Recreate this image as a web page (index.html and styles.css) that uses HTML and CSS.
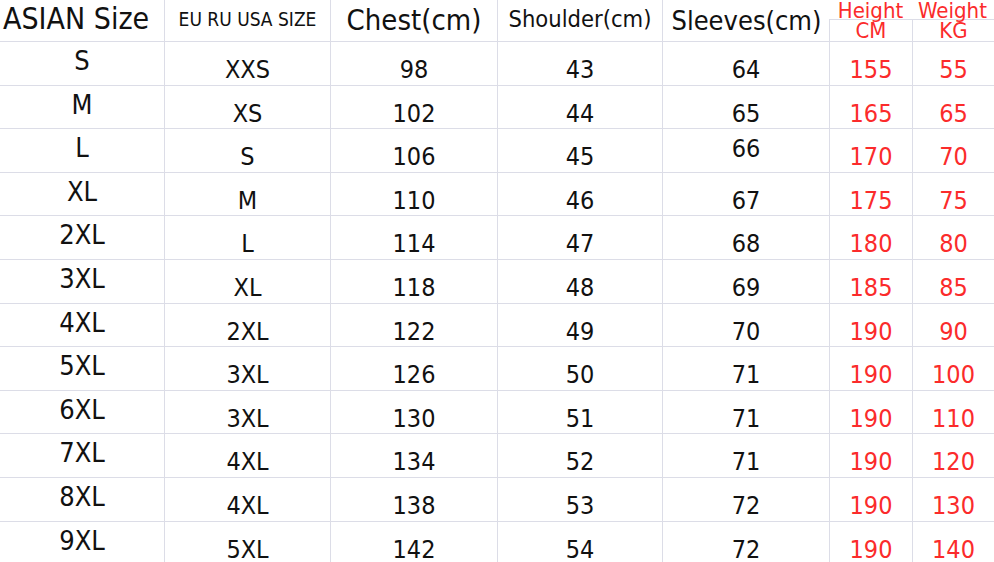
FILE: index.html
```html
<!DOCTYPE html>
<html>
<head>
<meta charset="utf-8">
<link rel="stylesheet" href="styles.css">
</head>
<body>
<div class="chart">
  <div class="hcell h-asian">ASIAN Size</div>
  <div class="hcell h-eu">EU RU USA SIZE</div>
  <div class="hcell h-chest">Chest(cm)</div>
  <div class="hcell h-shoulder">Shoulder(cm)</div>
  <div class="hcell h-sleeves">Sleeves(cm)</div>
  <div class="hcell h-red">
    <div class="red-top"><span class="rt-h">Height</span><span class="rt-w">Weight</span></div>
    <div class="red-bot"><span class="rb-h">CM</span><span class="rb-w">KG</span></div>
  </div>

  <div class="c c0">S</div><div class="c">XXS</div><div class="c">98</div><div class="c">43</div><div class="c">64</div><div class="c red">155</div><div class="c red last">55</div>
  <div class="c c0">M</div><div class="c">XS</div><div class="c">102</div><div class="c">44</div><div class="c">65</div><div class="c red">165</div><div class="c red last">65</div>
  <div class="c c0">L</div><div class="c">S</div><div class="c">106</div><div class="c">45</div><div class="c up">66</div><div class="c red">170</div><div class="c red last">70</div>
  <div class="c c0">XL</div><div class="c">M</div><div class="c">110</div><div class="c">46</div><div class="c">67</div><div class="c red">175</div><div class="c red last">75</div>
  <div class="c c0">2XL</div><div class="c">L</div><div class="c">114</div><div class="c">47</div><div class="c">68</div><div class="c red">180</div><div class="c red last">80</div>
  <div class="c c0">3XL</div><div class="c">XL</div><div class="c">118</div><div class="c">48</div><div class="c">69</div><div class="c red">185</div><div class="c red last">85</div>
  <div class="c c0">4XL</div><div class="c">2XL</div><div class="c">122</div><div class="c">49</div><div class="c">70</div><div class="c red">190</div><div class="c red last">90</div>
  <div class="c c0">5XL</div><div class="c">3XL</div><div class="c">126</div><div class="c">50</div><div class="c">71</div><div class="c red">190</div><div class="c red last">100</div>
  <div class="c c0">6XL</div><div class="c">3XL</div><div class="c">130</div><div class="c">51</div><div class="c">71</div><div class="c red">190</div><div class="c red last">110</div>
  <div class="c c0">7XL</div><div class="c">4XL</div><div class="c">134</div><div class="c">52</div><div class="c">71</div><div class="c red">190</div><div class="c red last">120</div>
  <div class="c c0">8XL</div><div class="c">4XL</div><div class="c">138</div><div class="c">53</div><div class="c">72</div><div class="c red">190</div><div class="c red last">130</div>
  <div class="c c0">9XL</div><div class="c">5XL</div><div class="c">142</div><div class="c">54</div><div class="c">72</div><div class="c red">190</div><div class="c red last">140</div>
</div>
</body>
</html>
```

FILE: styles.css
```css
html, body {
  margin: 0;
  padding: 0;
  background: #ffffff;
  overflow: hidden;
}

.chart {
  display: grid;
  grid-template-columns: 165px 166px 167px 165px 167px 83px 81px;
  grid-template-rows: 42px;
  grid-auto-rows: 43.6px;
  width: 994px;
  font-family: "DejaVu Sans Condensed", "DejaVu Sans", sans-serif;
  font-stretch: condensed;
  color: #111111;
}

.c {
  border-right: 1px solid #dcdde7;
  border-bottom: 1px solid #dcdde7;
  text-align: center;
  font-size: 25px;
  line-height: 29px;
  padding-top: 13px;
  box-sizing: border-box;
}

.c.c0 {
  font-size: 27px;
  padding-top: 4px;
}

.c.up {
  padding-top: 5px;
}

.c.red {
  color: #fb2b2b;
}

.c.last {
  border-right: none;
}

.hcell {
  border-right: 1px solid #dcdde7;
  border-bottom: 1px solid #dcdde7;
  box-sizing: border-box;
  white-space: nowrap;
  text-align: center;
}

.h-asian {
  font-size: 30px;
  line-height: 34px;
  padding-top: 2px;
  text-align: left;
  padding-left: 3px;
}

.h-eu {
  font-size: 19px;
  line-height: 22px;
  padding-top: 8px;
}

.h-chest {
  font-size: 29px;
  line-height: 34px;
  padding-top: 3px;
}

.h-shoulder {
  font-size: 23.5px;
  line-height: 26px;
  padding-top: 6px;
}

.h-sleeves {
  font-size: 27px;
  line-height: 32px;
  padding-top: 5px;
  border-right: none;
}

.h-red {
  grid-column: span 2;
  border-right: none;
  color: #fb2b2b;
  font-size: 22px;
  display: flex;
  flex-direction: column;
}

.red-top {
  height: 19px;
  border-bottom: 1px solid #dcdde7;
  display: flex;
  line-height: 21px;
  margin-left: -1px;
}

.rt-h, .rb-h {
  width: 83px;
  text-align: center;
}

.rt-w, .rb-w {
  width: 81px;
  text-align: center;
}

.red-bot {
  flex: 1;
  display: flex;
  line-height: 22px;
  margin-left: -1px;
  border-left: 1px solid #dcdde7;
}

.rb-h {
  border-right: 1px solid #dcdde7;
  box-sizing: border-box;
}
```
